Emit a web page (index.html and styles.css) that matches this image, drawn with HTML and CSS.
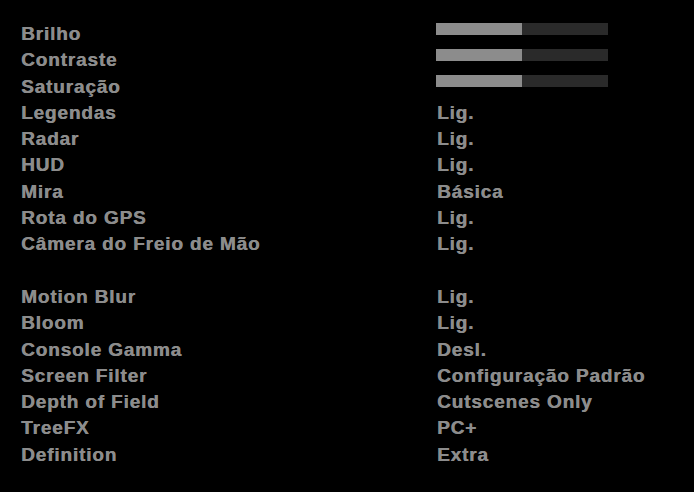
FILE: index.html
```html
<!DOCTYPE html>
<html lang="pt">
<head>
<meta charset="utf-8">
<link rel="stylesheet" href="styles.css">
</head>
<body>
<div class="menu">
  <div class="row"><span class="label">Brilho</span><span class="value"><span class="bar"><span class="fill" style="width:50%"></span></span></span></div>
  <div class="row"><span class="label">Contraste</span><span class="value"><span class="bar"><span class="fill" style="width:50%"></span></span></span></div>
  <div class="row"><span class="label">Saturação</span><span class="value"><span class="bar"><span class="fill" style="width:50%"></span></span></span></div>
  <div class="row"><span class="label">Legendas</span><span class="value">Lig.</span></div>
  <div class="row"><span class="label">Radar</span><span class="value">Lig.</span></div>
  <div class="row"><span class="label">HUD</span><span class="value">Lig.</span></div>
  <div class="row"><span class="label">Mira</span><span class="value">Básica</span></div>
  <div class="row"><span class="label">Rota do GPS</span><span class="value">Lig.</span></div>
  <div class="row"><span class="label">Câmera do Freio de Mão</span><span class="value">Lig.</span></div>
  <div class="row spacer"></div>
  <div class="row"><span class="label">Motion Blur</span><span class="value">Lig.</span></div>
  <div class="row"><span class="label">Bloom</span><span class="value">Lig.</span></div>
  <div class="row"><span class="label">Console Gamma</span><span class="value">Desl.</span></div>
  <div class="row"><span class="label">Screen Filter</span><span class="value">Configuração Padrão</span></div>
  <div class="row"><span class="label">Depth of Field</span><span class="value">Cutscenes Only</span></div>
  <div class="row"><span class="label">TreeFX</span><span class="value">PC+</span></div>
  <div class="row"><span class="label">Definition</span><span class="value">Extra</span></div>
</div>
</body>
</html>
```
FILE: styles.css
```css
html, body {
  margin: 0;
  padding: 0;
  background: #000;
}
body {
  width: 694px;
  height: 492px;
  overflow: hidden;
  font-family: "Liberation Sans", Arial, sans-serif;
  font-weight: bold;
  font-size: 19px;
  letter-spacing: 0.85px;
  color: #8c8c8c;
  text-shadow: 0.4px 0 0 #8c8c8c;
}
.menu {
  padding: 21px 0 0 21px;
  display: flex;
  flex-direction: column;
}
.row {
  display: grid;
  grid-template-columns: 416px 1fr;
  height: 26.3px;
  line-height: 26.3px;
  white-space: nowrap;
}
.value {
  display: flex;
  align-items: center;
}
.bar {
  display: block;
  width: 172px;
  height: 12px;
  margin-left: -1px;
  margin-top: -11px;
  background: #2a2a2a;
}
.fill {
  display: block;
  height: 100%;
  background: #8c8c8c;
}
```
